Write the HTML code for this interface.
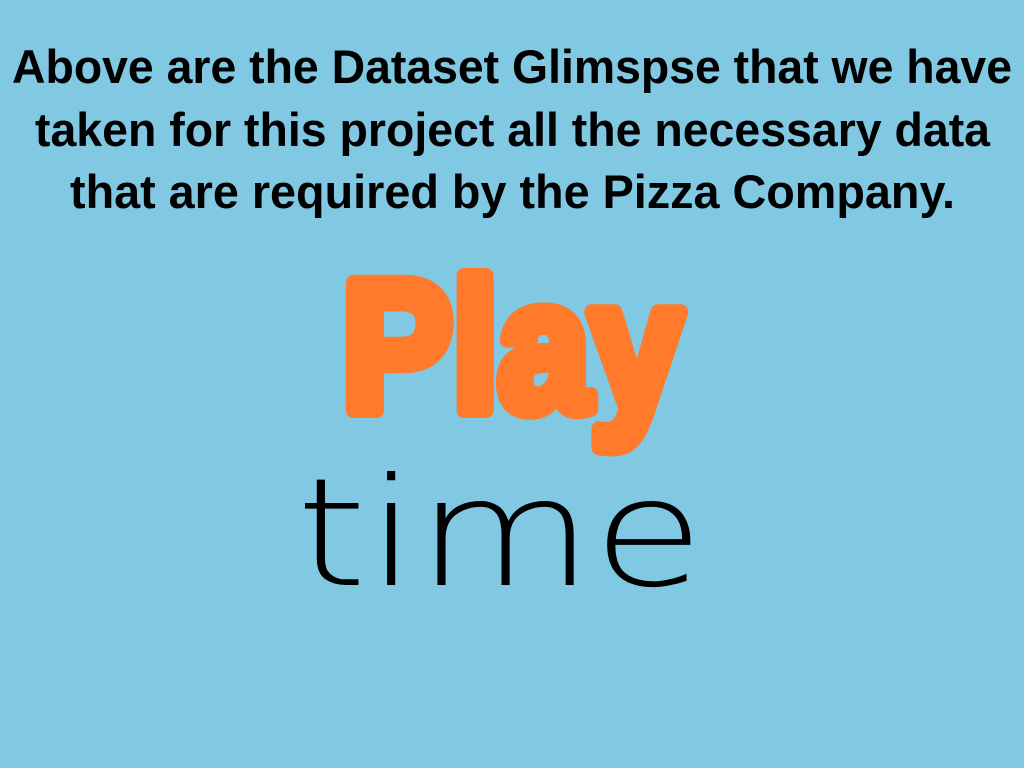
<!DOCTYPE html>
<html><head><meta charset="utf-8"><style>
html,body{margin:0;padding:0;background:#81c8e3;}
svg{display:block;}
</style></head><body>
<svg width="1024" height="768" viewBox="0 0 1024 768">
<rect width="1024" height="768" fill="#81c8e3"/>
<g font-family="Liberation Sans, sans-serif" font-weight="bold" font-size="47" fill="#000">
<text x="12" y="83" textLength="1000" lengthAdjust="spacingAndGlyphs">Above are the Dataset Glimspse that we have</text>
<text x="35" y="146" textLength="955" lengthAdjust="spacingAndGlyphs">taken for this project all the necessary data</text>
<text x="70" y="208" textLength="885" lengthAdjust="spacingAndGlyphs">that are required by the Pizza Company.</text>
</g>
<text x="342" y="410" font-family="Liberation Sans, sans-serif" font-weight="bold" font-size="185" fill="#ff7a2a" stroke="#ff7a2a" stroke-width="16" stroke-linejoin="round" textLength="340" lengthAdjust="spacingAndGlyphs">Play</text>
<text x="296" y="585" font-family="DejaVu Sans ExtraLight, DejaVu Sans, sans-serif" font-weight="200" font-size="150" fill="#000" textLength="408" lengthAdjust="spacingAndGlyphs">time</text>
</svg>
</body></html>
